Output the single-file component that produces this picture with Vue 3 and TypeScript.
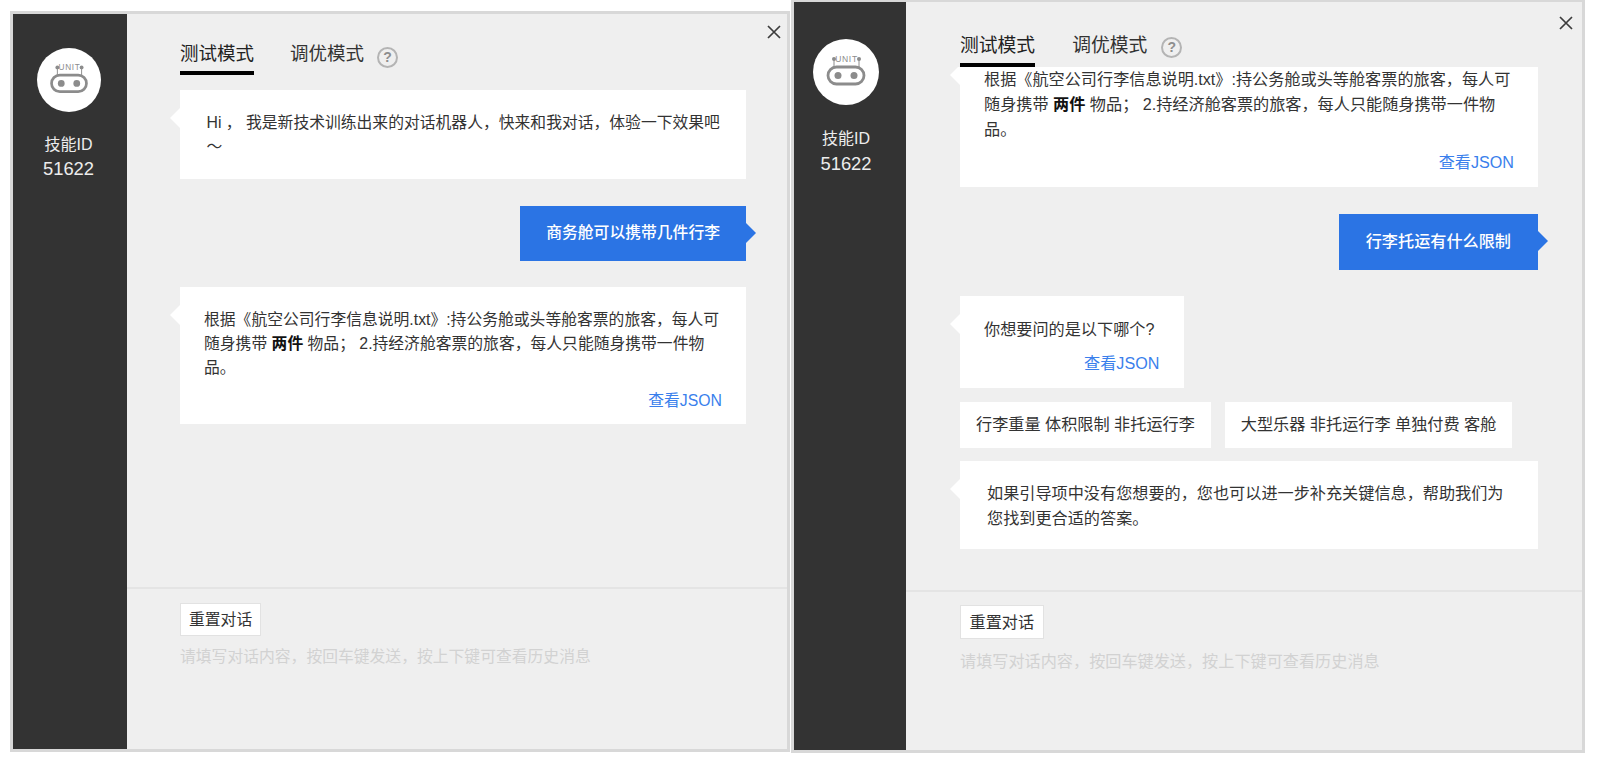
<script setup lang="ts">
interface Msg {
  kind: 'bot' | 'user' | 'options'
  text?: string
  strong?: string
  after?: string
  json?: boolean
  variant?: 'intro' | 'fit' | 'wide'
  options?: string[]
}
interface Panel {
  id: string
  messages: Msg[]
}

const answer: Msg = {
  kind: 'bot',
  text: '根据《航空公司行李信息说明.txt》:持公务舱或头等舱客票的旅客，每人可\n随身携带 ',
  strong: '两件',
  after: ' 物品； 2.持经济舱客票的旅客，每人只能随身携带一件物\n品。',
  json: true,
}

const panels: Panel[] = [
  {
    id: 'first',
    messages: [
      { kind: 'bot', variant: 'intro', text: 'Hi ， 我是新技术训练出来的对话机器人，快来和我对话，体验一下效果吧\n～' },
      { kind: 'user', text: '商务舱可以携带几件行李' },
      answer,
    ],
  },
  {
    id: 'second',
    messages: [
      answer,
      { kind: 'user', text: '行李托运有什么限制' },
      { kind: 'bot', variant: 'fit', text: '你想要问的是以下哪个?', json: true },
      { kind: 'options', options: ['行李重量 体积限制 非托运行李', '大型乐器 非托运行李 单独付费 客舱'] },
      {
        kind: 'bot',
        variant: 'wide',
        text: '如果引导项中没有您想要的，您也可以进一步补充关键信息，帮助我们为\n您找到更合适的答案。',
      },
    ],
  },
]
</script>

<template>
  <div class="page">
    <section v-for="panel in panels" :key="panel.id" class="panel" :class="panel.id">
      <aside class="side">
        <div class="avatar">
          <svg viewBox="0 0 66 66" width="100%" height="100%">
            <circle cx="33" cy="33" r="33" fill="#fff" />
            <rect x="15" y="28" width="36" height="17" rx="8.5" fill="none" stroke="#8c8c8c" stroke-width="2.8" />
            <circle cx="25" cy="36.5" r="3.5" fill="#8c8c8c" />
            <circle cx="41" cy="36.5" r="3.5" fill="#8c8c8c" />
            <path d="M21 20v8M46 20v8" stroke="#8c8c8c" stroke-width="1" fill="none" />
            <circle cx="21" cy="20" r="2" fill="#8c8c8c" />
            <circle cx="46" cy="20" r="2" fill="#8c8c8c" />
            <text x="33.5" y="23" text-anchor="middle" class="unit">UNIT</text>
          </svg>
        </div>
        <div class="skill">技能ID</div>
        <div class="skill-id">51622</div>
      </aside>

      <main class="main">
        <svg class="close" viewBox="0 0 14 14" width="14" height="14">
          <path d="M1 1l12 12M13 1L1 13" stroke="#3c3c3c" stroke-width="1.7" fill="none" />
        </svg>

        <header class="tabs">
          <span class="tab active">测试模式</span>
          <span class="tab">调优模式</span>
          <span class="help">?</span>
        </header>

        <div class="messages">
          <template v-for="(m, i) in panel.messages" :key="i">
            <div v-if="m.kind === 'user'" class="msg user">{{ m.text }}</div>
            <div v-else-if="m.kind === 'options'" class="msg options">
              <span v-for="o in m.options" :key="o" class="option">{{ o }}</span>
            </div>
            <div v-else class="msg bot" :class="[m.variant, { 'has-json': m.json }]">
              <p>{{ m.text }}<strong v-if="m.strong">{{ m.strong }}</strong>{{ m.after }}</p>
              <a v-if="m.json" class="json">查看JSON</a>
            </div>
          </template>
        </div>

        <footer class="footer">
          <button class="reset" type="button">重置对话</button>
          <input class="input" type="text" placeholder="请填写对话内容，按回车键发送，按上下键可查看历史消息" />
        </footer>
      </main>
    </section>
  </div>
</template>

<style scoped>
.page {
  display: flex;
  align-items: flex-start;
  font-family: "Liberation Sans", "Noto Sans CJK SC", sans-serif;
  color: #333;
}
.panel {
  display: flex;
  box-sizing: border-box;
  border: 3px solid #d8d8d8;
  background: #efefef;
}
.first {
  width: 780px;
  height: 741px;
  margin: 11px 0 0 10px;
  --fs: 15.8px;
  --lh: 24px;
  --tab: 18.5px;
}
.second {
  width: 794px;
  height: 753px;
  margin-left: 1px;
  border-top-width: 2px;
  --fs: 16.15px;
  --lh: 25px;
  --tab: 18.8px;
}

.side {
  flex: none;
  box-sizing: border-box;
  background: #333;
  color: #ececec;
  text-align: center;
}
.first .side {
  width: 114px;
  padding: 34px 3px 0 0;
}
.second .side {
  width: 112px;
  padding: 37px 8px 0 0;
}
.avatar {
  margin: 0 auto;
}
.first .avatar {
  width: 64px;
  height: 64px;
  margin-bottom: 21px;
}
.second .avatar {
  width: 66px;
  height: 66px;
  margin-bottom: 22px;
}
.unit {
  font-size: 8.5px;
  letter-spacing: 0.7px;
  fill: #8c8c8c;
}
.skill {
  font-size: 16px;
  line-height: 23px;
}
.skill-id {
  font-size: 18.4px;
  line-height: 23px;
  margin-top: 1px;
}
.second .skill-id {
  margin-top: 2px;
}

.main {
  position: relative;
  flex: 1;
  min-width: 0;
  display: flex;
  flex-direction: column;
}
.close {
  position: absolute;
}
.first .close {
  top: 11px;
  right: 6px;
}
.second .close {
  top: 14px;
  right: 9px;
}

.tabs {
  flex: none;
  display: flex;
  align-items: flex-start;
  font-size: var(--tab);
  line-height: 26px;
}
.first .tabs {
  padding: 27px 0 0 53px;
  gap: 36px;
}
.second .tabs {
  padding: 31px 0 0 54px;
  gap: 37px;
}
.tab {
  padding-bottom: 8px;
}
.tab.active {
  color: #222;
  padding-bottom: 3.5px;
  border-bottom: 4.5px solid #000;
}
.help {
  box-sizing: border-box;
  width: 21px;
  height: 21px;
  margin-left: -23px;
  border: 2px solid #b4b4b4;
  border-radius: 50%;
  color: #8e8e8e;
  font-size: 14px;
  font-weight: 700;
  line-height: 17px;
  text-align: center;
}
.first .help {
  margin-top: 6px;
}
.second .help {
  margin-top: 4px;
}

.messages {
  flex: 1;
  min-height: 0;
  overflow: hidden;
  display: flex;
  flex-direction: column;
  font-size: var(--fs);
  line-height: var(--lh);
}
.first .messages {
  padding: 15px 41px 0 53px;
  justify-content: flex-start;
}
.second .messages {
  padding: 0 44px 41px 54px;
  justify-content: flex-end;
}
.msg {
  flex: none;
}
.msg + .msg {
  margin-top: 26.5px;
}
.msg.options {
  margin-top: 14px;
}
.msg.options + .msg {
  margin-top: 13px;
}

.bot {
  position: relative;
  background: #fff;
  padding: 20px 24px;
}
.bot::before {
  content: "";
  position: absolute;
  left: -10px;
  top: 18px;
  border-right: 10px solid #fff;
  border-top: 10px solid transparent;
  border-bottom: 10px solid transparent;
}
.bot.has-json {
  padding-bottom: 12.5px;
}
.first .bot.has-json {
  padding: 21px 24px 11px;
}
.first .bot.has-json .json {
  margin-top: 9px;
}
.bot.intro {
  padding: 21px 24px 20px 26.5px;
}
.bot.fit {
  align-self: flex-start;
  padding: 21px 30px 12px 24px;
}
.bot.fit .json {
  margin: 8.5px -5px 0 0;
}
.bot.wide {
  padding: 20.5px 27px 18px;
}
.bot p {
  margin: 0;
  white-space: pre;
}
.bot strong {
  color: #111;
  font-weight: 700;
}
.json {
  display: block;
  margin-top: 8px;
  text-align: right;
  color: #3a7fec;
}

.user {
  position: relative;
  align-self: flex-end;
  background: #2b74e4;
  color: #fff;
  font-weight: 500;
  padding: 15.5px 26px;
}
.second .user {
  padding: 15.5px 27px;
}
.user::after {
  content: "";
  position: absolute;
  right: -10px;
  top: 17.5px;
  border-left: 10px solid #2b74e4;
  border-top: 10px solid transparent;
  border-bottom: 10px solid transparent;
}

.options {
  display: flex;
  gap: 14px;
}
.option {
  background: #fff;
  padding: 10.5px 16px;
  white-space: nowrap;
}

.footer {
  flex: none;
  display: flex;
  flex-direction: column;
  align-items: flex-start;
  box-sizing: border-box;
  border-top: 2px solid #e4e4e4;
}
.first .footer {
  height: 162px;
  padding: 14px 0 0 53px;
}
.second .footer {
  height: 160px;
  padding: 13px 0 0 54px;
}
.reset {
  box-sizing: border-box;
  height: 33px;
  padding: 0 8px;
  border: 1px solid #e2e2e2;
  background: #fff;
  color: #333;
  font: inherit;
  font-size: var(--fs);
  line-height: 1;
}
.second .reset {
  height: 34px;
  padding: 0 8.5px;
}
.input {
  width: 600px;
  height: 24px;
  padding: 0;
  border: 0;
  outline: 0;
  background: transparent;
  font: inherit;
  font-size: var(--fs);
}
.first .input {
  margin-top: 9px;
}
.second .input {
  margin-top: 10px;
}
.input::placeholder {
  color: #d2d2d2;
  opacity: 1;
}
</style>
